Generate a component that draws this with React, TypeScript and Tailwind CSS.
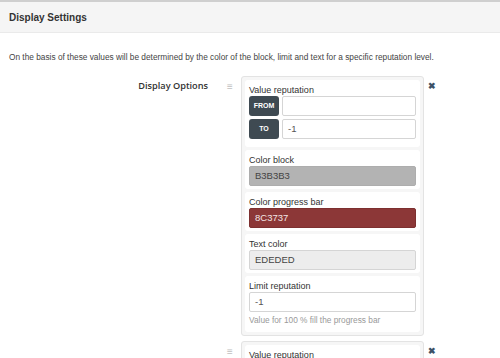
import React from "react";

const ARIAL = { fontFamily: "'Liberation Sans', Arial, sans-serif" };

function Section({ children, pb = "pb-[3px]" }: { children: React.ReactNode; pb?: string }) {
  return <div className={`bg-white rounded-[3px] px-[4px] pt-[4px] ${pb}`}>{children}</div>;
}

function Label({ children }: { children: React.ReactNode }) {
  return <div className="text-[9px] leading-[12px] text-[#333]">{children}</div>;
}

function Card({ partial }: { partial?: boolean }) {
  return (
    <div className="flex items-start">
      <div className="w-[20px] text-[#c0c0c0] text-[10px] leading-none pt-[6px] pl-[6px]">≡</div>
      <div className="w-[183px] border border-[#e3e3e3] bg-[#f6f6f6] rounded-[3px] p-[3px] flex flex-col gap-[3px]">
        <Section pb="pb-[8px]">
          <Label>Value reputation</Label>
          <div className="flex flex-col gap-[3px]">
            <div className="flex gap-[3px]">
              <div className="w-[30px] h-[20px] bg-[#3f4a52] rounded-[3px] text-white text-[7px] font-bold flex items-center justify-center">FROM</div>
              <div className="flex-1 h-[20px] border border-[#d5d5d5] rounded-[2px] bg-white"></div>
            </div>
            {!partial && (
              <div className="flex gap-[3px]">
                <div className="w-[30px] h-[20px] bg-[#3f4a52] rounded-[3px] text-white text-[7px] font-bold flex items-center justify-center">TO</div>
                <div className="flex-1 h-[20px] border border-[#d5d5d5] rounded-[2px] bg-white text-[9.5px] text-[#555] flex items-center px-[5px]">-1</div>
              </div>
            )}
          </div>
        </Section>
        {!partial && (
          <>
            <Section>
              <Label>Color block</Label>
              <div className="h-[20px] rounded-[2px] bg-[#b3b3b3] border border-[#adadad] text-[9.5px] text-[#444] flex items-center px-[5px]">B3B3B3</div>
            </Section>
            <Section>
              <Label>Color progress bar</Label>
              <div className="h-[20px] rounded-[2px] bg-[#8c3737] border border-[#7d3030] text-[9.5px] text-[#f3e6e6] flex items-center px-[5px]">8C3737</div>
            </Section>
            <Section>
              <Label>Text color</Label>
              <div className="h-[20px] rounded-[2px] bg-[#ededed] border border-[#d5d5d5] text-[9.5px] text-[#444] flex items-center px-[5px]">EDEDED</div>
            </Section>
            <Section pb="pb-[7px]">
              <Label>Limit reputation</Label>
              <div className="h-[20px] rounded-[2px] bg-white border border-[#d5d5d5] text-[9.5px] text-[#555] flex items-center px-[5px]">-1</div>
              <div className="text-[8.3px] leading-[10px] text-[#999] mt-[3px]">Value for 100 % fill the progress bar</div>
            </Section>
          </>
        )}
      </div>
      <div className="pl-[4px] pt-[6px] text-[#3d5266] text-[9px] font-bold leading-none">✖</div>
    </div>
  );
}

export default function App() {
  return (
    <div className="w-[500px] h-[358px] overflow-hidden bg-white" style={ARIAL}>
      <div className="border-t-2 border-[#cfcfcf]"></div>
      <div className="h-[31px] bg-[#f5f5f5] border-b border-[#eaeaea] flex items-center px-[9px]">
        <span className="text-[10px] font-bold text-[#333]">Display Settings</span>
      </div>
      <div className="px-[9px] pt-[19px] text-[8.3px] leading-[11px] text-[#444]">
        On the basis of these values will be determined by the color of the block, limit and text for a specific reputation level.
      </div>
      <div className="flex mt-[13px]">
        <div className="w-[221px] text-right pr-[13px] pt-[3px] text-[9.2px] font-semibold text-[#333]" style={{ fontFamily: "'Open Sans', sans-serif" }}>Display Options</div>
        <div className="flex flex-col gap-[5px]">
          <Card />
          <Card partial />
        </div>
      </div>
    </div>
  );
}
